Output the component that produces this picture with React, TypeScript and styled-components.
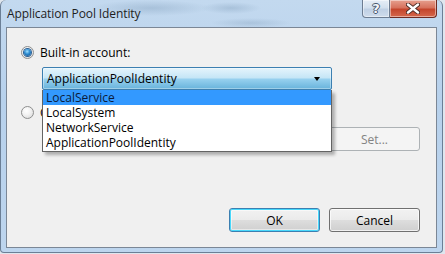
import styled, { createGlobalStyle } from "styled-components";

const GlobalStyle = createGlobalStyle`
  html, body {
    margin: 0;
    padding: 0;
    background: #dfe6ee;
  }
  body {
    font-family: "Open Sans", "Noto Sans", "DejaVu Sans", sans-serif;
    font-size: 12px;
    color: #000;
  }
`;

const Frame = styled.div`
  width: 443px;
  height: 253px;
  box-sizing: border-box;
  display: flex;
  flex-direction: column;
  border-radius: 6px 6px 4px 4px;
  border: 1px solid #6b7f96;
  border-top: none;
  background:
    radial-gradient(ellipse 60px 8px at 150px 8px, rgba(120, 150, 180, 0.35), transparent),
    radial-gradient(ellipse 30px 6px at 230px 8px, rgba(120, 150, 180, 0.35), transparent),
    radial-gradient(ellipse 40px 5px at 250px 23px, rgba(120, 150, 180, 0.3), transparent),
    linear-gradient(180deg, #c3d9ef 0%, #b7d1ec 40%, #bdd5ee 100%);
`;

const TitleBar = styled.div`
  height: 27px;
  display: flex;
  align-items: flex-start;
  padding-left: 6px;
  padding-right: 5px;
`;

const Title = styled.div`
  flex: 1;
  padding-top: 5px;
  font-size: 12px;
  color: #1e1e1e;
  letter-spacing: -0.1px;
`;

const CaptionButtons = styled.div`
  display: flex;
`;

const CaptionButton = styled.div<{ $close?: boolean }>`
  width: ${(p) => (p.$close ? 47 : 28)}px;
  height: 18px;
  box-sizing: border-box;
  display: flex;
  align-items: center;
  justify-content: center;
  border: 1px solid ${(p) => (p.$close ? "#6e2b22" : "#6d7d92")};
  border-top: none;
  border-left: ${(p) => (p.$close ? "none" : "1px solid #6d7d92")};
  border-radius: ${(p) => (p.$close ? "0 0 4px 0" : "0 0 0 4px")};
  background: ${(p) =>
    p.$close
      ? "linear-gradient(180deg, #e6a08f 0%, #d7725d 45%, #c4452c 55%, #d5684c 100%)"
      : "linear-gradient(180deg, #e6eef7 0%, #d3e0ee 45%, #bfd0e4 55%, #cfdcec 100%)"};
  box-shadow: inset 0 0 0 1px rgba(255, 255, 255, 0.45);
`;

const HelpGlyph = styled.span`
  font-family: "DejaVu Sans", sans-serif;
  font-weight: bold;
  font-size: 13px;
  line-height: 1;
  color: #f4f7fb;
  text-shadow: 0 0 1px #4a5a70, 1px 0 0 #4a5a70, -1px 0 0 #4a5a70, 0 1px 0 #4a5a70, 0 -1px 0 #4a5a70;
`;

const Client = styled.div`
  flex: 1;
  margin: 0 0 4px 5px;
  width: 431px;
  box-sizing: border-box;
  border: 1px solid #7b8796;
  background: #f0f0f0;
  display: flex;
  flex-direction: column;
  padding: 18px 16px 15px 14px;
`;

const RadioRow = styled.label<{ $top: number }>`
  display: flex;
  align-items: center;
  height: 13px;
  margin-top: ${(p) => p.$top}px;
  gap: 6px;
`;

const Radio = styled.span<{ $checked?: boolean }>`
  width: 13px;
  height: 13px;
  box-sizing: border-box;
  border-radius: 50%;
  border: 1px solid #8e8f8f;
  background: radial-gradient(circle at 40% 35%, #ffffff 0%, #f3f3f3 40%, #d4d4d4 100%);
  display: flex;
  align-items: center;
  justify-content: center;
  &::after {
    content: "";
    display: ${(p) => (p.$checked ? "block" : "none")};
    width: 7px;
    height: 7px;
    border-radius: 50%;
    background: radial-gradient(circle at 45% 35%, #9fe0ff 0%, #2b8ad0 45%, #104a84 100%);
    box-shadow: 0 0 0 1px #2c5f93;
  }
`;

const Label = styled.span`
  line-height: 13px;
`;

const ComboWrap = styled.div`
  position: relative;
  margin: 8px 0 0 21px;
  width: 290px;
`;

const Combo = styled.div`
  height: 23px;
  box-sizing: border-box;
  border: 1px solid #3c7fb1;
  border-radius: 2px;
  background: linear-gradient(180deg, #e5f4fc 0%, #c4e5f6 48%, #98d1ef 52%, #68b3db 100%);
  display: flex;
  align-items: center;
  padding: 0 0 0 4px;
  box-shadow: inset 0 0 0 1px rgba(255, 255, 255, 0.35);
`;

const ComboText = styled.span`
  flex: 1;
`;

const Arrow = styled.span`
  width: 0;
  height: 0;
  margin-right: 11px;
  margin-top: 1px;
  border-left: 3.5px solid transparent;
  border-right: 3.5px solid transparent;
  border-top: 4px solid #000;
`;

const DropList = styled.ul`
  position: absolute;
  left: 0;
  top: 100%;
  width: 290px;
  box-sizing: border-box;
  margin: 0;
  padding: 0 0 1px;
  list-style: none;
  background: #fff;
  border: 1px solid #646464;
  border-top: none;
  box-shadow: 3px 3px 3px rgba(0, 0, 0, 0.28);
  z-index: 2;
`;

const DropItem = styled.li<{ $active?: boolean }>`
  height: 15px;
  line-height: 15px;
  padding-left: 3px;
  background: ${(p) => (p.$active ? "#3399ff" : "transparent")};
  color: ${(p) => (p.$active ? "#0b1b3a" : "#000")};
`;

const CustomRow = styled.div`
  display: flex;
  margin-top: 8px;
  height: 24px;
  padding-left: 21px;
  gap: 8px;
`;

const TextField = styled.div`
  flex: 1;
  box-sizing: border-box;
  border: 1px solid #abadb3;
  background: #fff;
`;

const Button = styled.div<{ $default?: boolean; $disabled?: boolean }>`
  width: 91px;
  height: 24px;
  box-sizing: border-box;
  border-radius: 3px;
  display: flex;
  align-items: center;
  justify-content: center;
  color: ${(p) => (p.$disabled ? "#838383" : "#000")};
  border: 1px solid
    ${(p) => (p.$disabled ? "#adb2b5" : p.$default ? "#3c7fb1" : "#707070")};
  background: ${(p) =>
    p.$disabled
      ? "#f4f4f4"
      : "linear-gradient(180deg, #f2f2f2 0%, #ebebeb 48%, #dddddd 52%, #cfcfcf 100%)"};
  box-shadow: ${(p) =>
    p.$default
      ? "inset 0 0 0 1px #48d8fb, inset 0 0 0 2px rgba(255,255,255,0.5)"
      : p.$disabled
      ? "none"
      : "inset 0 0 0 1px rgba(255,255,255,0.7)"};
`;

const Footer = styled.div`
  margin-top: auto;
  display: flex;
  justify-content: flex-end;
  gap: 9px;
`;

function CloseGlyph() {
  return (
    <svg width="14" height="11" viewBox="0 0 14 11">
      <path
        d="M2 1.5 L12 9.5 M12 1.5 L2 9.5"
        stroke="#4a2a24"
        strokeWidth="4.2"
        strokeLinecap="round"
      />
      <path
        d="M2 1.5 L12 9.5 M12 1.5 L2 9.5"
        stroke="#ffffff"
        strokeWidth="2.4"
        strokeLinecap="round"
      />
    </svg>
  );
}

const accounts = ["LocalService", "LocalSystem", "NetworkService", "ApplicationPoolIdentity"];

export default function App() {
  return (
    <>
      <GlobalStyle />
      <Frame>
        <TitleBar>
          <Title>Application Pool Identity</Title>
          <CaptionButtons>
            <CaptionButton>
              <HelpGlyph>?</HelpGlyph>
            </CaptionButton>
            <CaptionButton $close>
              <CloseGlyph />
            </CaptionButton>
          </CaptionButtons>
        </TitleBar>
        <Client>
          <RadioRow $top={0}>
            <Radio $checked />
            <Label>Built-in account:</Label>
          </RadioRow>
          <ComboWrap>
            <Combo>
              <ComboText>ApplicationPoolIdentity</ComboText>
              <Arrow />
            </Combo>
            <DropList>
              {accounts.map((a, i) => (
                <DropItem key={a} $active={i === 0}>
                  {a}
                </DropItem>
              ))}
            </DropList>
          </ComboWrap>
          <RadioRow $top={16}>
            <Radio />
            <Label>Custom account:</Label>
          </RadioRow>
          <CustomRow>
            <TextField />
            <Button $disabled>Set...</Button>
          </CustomRow>
          <Footer>
            <Button $default>OK</Button>
            <Button>Cancel</Button>
          </Footer>
        </Client>
      </Frame>
    </>
  );
}
